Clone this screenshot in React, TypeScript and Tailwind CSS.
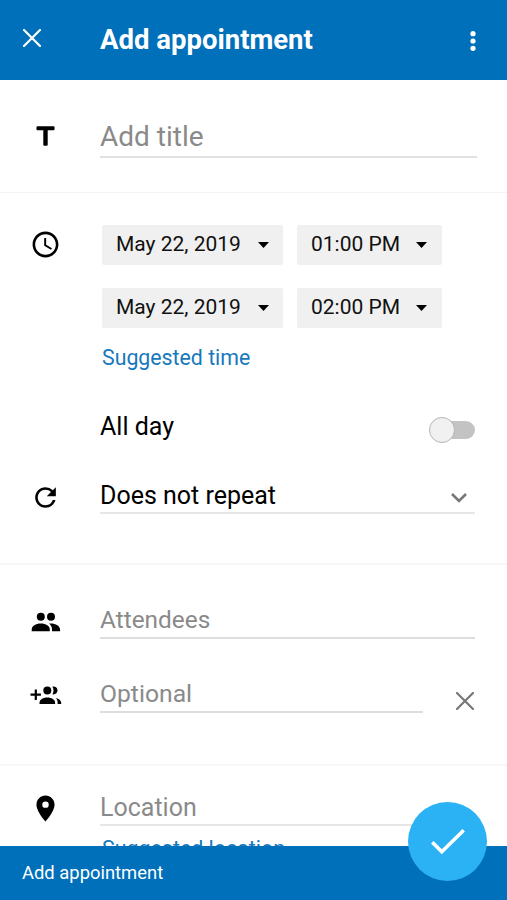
import React from 'react';
import { MdAccessTime, MdRefresh, MdLocationOn } from 'react-icons/md';

interface DateTime {
  date: string;
  time: string;
}

const slots: DateTime[] = [
  { date: 'May 22, 2019', time: '01:00 PM' },
  { date: 'May 22, 2019', time: '02:00 PM' },
];

const TitleIcon = () => (
  <svg className="w-[31px] h-[31px]" viewBox="0 0 24 24" fill="currentColor">
    <path d="M5.800 4h12.400a.8.8 0 0 1 .8.8v1.600a.8.8 0 0 1-.8.8h-4.500v11.200a.8.8 0 0 1-.8.8h-1.800a.8.8 0 0 1-.8-.8V7.200H5.800a.8.8 0 0 1-.8-.8V4.800a.8.8 0 0 1 .8-.8z" />
  </svg>
);

const PeopleIcon = () => (
  <svg className="w-[31px] h-[31px]" viewBox="0 0 31 31" fill="currentColor">
    <circle cx="10.800" cy="9.800" r="4" />
    <circle cx="21" cy="9.800" r="4" />
    <path d="M1.700 24.300v-1.600c0-3.800 4-6.100 9.100-6.100s9 2.300 9 6.100v1.600z" />
    <path d="M19 16.500c6-.5 11.100 2 11.100 6.200v1.600H22v-1.600c0-2.600-1-4.600-3-6.200z" />
  </svg>
);

const PeopleAddIcon = () => (
  <svg className="w-[33px] h-[31px]" viewBox="0 0 33 31" fill="currentColor">
    <path d="M5.700 9.400h2.200v4.200h4v2.200h-4V20H5.700v-4.200H1.500v-2.200h4.200z" />
    <circle cx="18.300" cy="10.500" r="4" />
    <path d="M23.400 6.700c2.900-.5 5.100 1.200 5.100 3.800s-2.200 4.300-5.100 3.800c1.500-2.300 1.500-5.300 0-7.600z" />
    <path d="M10.500 24v-1.300c0-3.200 3.500-5.300 7.800-5.300s7.800 2.100 7.800 5.300V24z" />
    <path d="M26.700 18c3.400.7 5.500 2.500 5.500 4.700V24h-3.600v-1.400c0-1.800-.6-3.300-1.900-4.600z" />
  </svg>
);

const Cross = ({ className }: { className: string }) => (
  <svg className={className} viewBox="0 0 18 18" fill="none" stroke="currentColor" strokeLinecap="round">
    <path d="M1 1l16 16M17 1L1 17" />
  </svg>
);

const IconCell = ({ children }: { children: React.ReactNode }) => (
  <div className="w-[91px] shrink-0 flex justify-center mr-[9px]">{children}</div>
);

const Picker = ({ label, className }: { label: string; className: string }) => (
  <button className={`h-10 flex items-center justify-between bg-[#f0f0f0] rounded-[2px] text-[21px] text-[#111] whitespace-nowrap ${className}`}>
    <span className="pb-px">{label}</span>
    <svg className="w-[11px] h-[6px]" viewBox="0 0 11 6">
      <path d="M0 0h11L5.500 6z" fill="#000" />
    </svg>
  </button>
);

const App: React.FC = () => {
  return (
    <div className="relative w-full h-[900px] flex flex-col overflow-hidden bg-white text-black font-[Roboto,sans-serif]">
      <header className="h-20 shrink-0 flex items-center bg-[#0070ba] text-white">
        <Cross className="w-[18px] h-[18px] ml-[23px] mb-1 stroke-[2.2]" />
        <h1 className="ml-[59px] text-[27.5px] leading-8 font-bold">Add appointment</h1>
        <svg className="w-[6px] h-[20px] ml-auto mr-[31px] mt-[1px]" viewBox="0 0 6 20" fill="currentColor">
          <circle cx="3" cy="2.700" r="2.600" />
          <circle cx="3" cy="10" r="2.600" />
          <circle cx="3" cy="17.300" r="2.600" />
        </svg>
      </header>

      <main className="flex-1 min-h-0 overflow-hidden">
        <section className="h-[113px] pt-9 flex items-start border-b border-[#f3f3f3]">
          <IconCell><div className="pt-[5px]"><TitleIcon /></div></IconCell>
          <div className="w-[377px] h-[42px] border-b-2 border-[#e2e2e2] text-[28px] leading-[42px] text-[#8a8a8a]">Add title</div>
        </section>

        <section className="h-[372px] pt-8 border-b-2 border-[#f7f7f7]">
          <div className="flex items-start">
            <IconCell><MdAccessTime className="w-[31px] h-[31px] mt-1" /></IconCell>
            <div className="pl-[2px]">
              <div className="flex flex-col gap-[23px]">
                {slots.map((slot, i) => (
                  <div key={i} className="flex gap-[14px]">
                    <Picker label={slot.date} className="w-[181px] pl-[14px] pr-[14px]" />
                    <Picker label={slot.time} className="w-[145px] pl-[14px] pr-[15px]" />
                  </div>
                ))}
              </div>
              <a className="block mt-[14px] text-[21.3px] leading-8 text-[#1678bd]">Suggested time</a>
            </div>
          </div>

          <div className="ml-[100px] mr-8 mt-9 h-10 flex items-center justify-between">
            <span className="text-[25px] pb-[6px]">All day</span>
            <div className="w-[46px] h-[26px] flex items-center">
              <div className="w-[26px] h-[26px] shrink-0 z-10 rounded-full bg-[#f1f1f1] border border-[#b5b5b5]" />
              <div className="w-8 h-[18px] shrink-0 -ml-3 rounded-full bg-[#c3c3c3]" />
            </div>
          </div>

          <div className="mt-[25px] flex items-start">
            <IconCell><MdRefresh className="w-[31px] h-[31px] mt-[7px]" /></IconCell>
            <div className="w-[375px] h-[39px] flex justify-between border-b-2 border-[#e6e6e6]">
              <span className="text-[25px] leading-[42px]">Does not repeat</span>
              <svg className="w-4 h-[10px] mt-[18px] mr-2" viewBox="0 0 16 10" fill="none" stroke="#777" strokeWidth="2.600">
                <path d="M1 1l7 7 7-7" />
              </svg>
            </div>
          </div>
        </section>

        <section className="h-[201px] pt-9 border-b-2 border-[#f7f7f7]">
          <div className="flex items-start">
            <IconCell><div className="pt-[6px]"><PeopleIcon /></div></IconCell>
            <div className="w-[375px] h-[38px] border-b-2 border-[#dedede] text-[24.4px] leading-[38px] text-[#8a8a8a]">Attendees</div>
          </div>
          <div className="mt-9 flex items-start">
            <IconCell><div className="pt-[5px]"><PeopleAddIcon /></div></IconCell>
            <div className="w-[323px] h-[38px] border-b-2 border-[#dedede] text-[24.7px] leading-[38px] text-[#8a8a8a]">Optional</div>
            <Cross className="w-[18px] h-[18px] ml-[33px] mt-[17px] stroke-[2.2] text-[#777]" />
          </div>
        </section>

        <section className="pt-[21px] flex items-start">
          <IconCell><MdLocationOn className="w-[31px] h-[31px] mt-[6px]" /></IconCell>
          <div>
            <div className="w-[375px] h-[39px] border-b-2 border-[#e6e6e6] text-[25px] leading-[41px] text-[#8a8a8a]">Location</div>
            <a className="block ml-[2px] mt-[7px] text-[21.4px] leading-8 text-[#1678bd]">Suggested location</a>
          </div>
        </section>
      </main>

      <footer className="h-[54px] shrink-0 pl-[22px] flex items-center bg-[#0070ba] text-white text-[18.4px]">
        <span>Add appointment</span>
      </footer>

      <button className="absolute left-[408px] top-[802px] w-[79px] h-[79px] rounded-full flex items-center justify-center bg-[#2ab2f4]">
        <svg className="w-[34px] h-[26px]" viewBox="0 0 34 26" fill="none" stroke="#fff" strokeWidth="3.600">
          <path d="M1.300 13.300l9.500 9.500L32.700 1.300" />
        </svg>
      </button>
    </div>
  );
};

export default App;
